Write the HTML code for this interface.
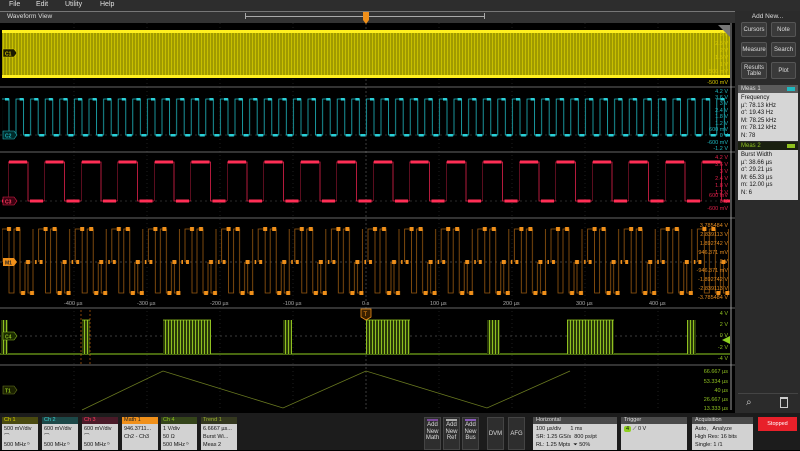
<!DOCTYPE html>
<html><head><meta charset="utf-8"><style>
*{margin:0;padding:0;box-sizing:border-box}
body{width:800px;height:450px;background:#000;font-family:"Liberation Sans",sans-serif;overflow:hidden;position:relative;color:#ddd}
.abs{position:absolute}
.menu{left:0;top:0;width:800px;height:11px;background:#2d2d2d;font-size:7px;color:#e0e0e0}
.menu span{position:absolute;top:1px}
.rp{left:735px;top:11px;width:65px;height:402px;background:#2b2b2b}
.btn{position:absolute;background:#3a3a3a;border:1px solid #555;border-radius:2px;color:#ddd;font-size:6px;text-align:center;display:flex;align-items:center;justify-content:center;line-height:6px}
.mh{position:absolute;font-size:6px;padding-left:3px;line-height:8px}
.mb{position:absolute;background:#d6d6d6;color:#111;font-size:6px;line-height:7.6px;padding:2px 3px;overflow:hidden}
.bb{left:0;top:413px;width:800px;height:37px;background:#1c1c1c}
.tab{position:absolute;top:417px;width:36px;height:33px}
.tab .h{height:7px;font-size:5.5px;line-height:7px;padding-left:2px}
.tab .b{background:#d2d2d2;color:#111;height:26px;font-size:5.5px;line-height:8px;padding:1px 2px}
.sb{position:absolute;top:417px;height:33px;background:#d2d2d2;color:#111;font-size:5.5px;line-height:8px}
.sb .h{background:#4a4a4a;color:#ddd;height:7px;line-height:7px;padding-left:3px}
.ab{position:absolute;top:417px;width:17px;height:33px;background:#2e2e2e;border:1px solid #444;font-size:6px;line-height:6.5px;text-align:center;color:#ddd}
</style></head><body>
<div class="abs menu"><span style="left:9px">File</span><span style="left:36px">Edit</span><span style="left:65px">Utility</span><span style="left:100px">Help</span></div>
<div class="abs" style="left:0;top:11px;width:735px;height:12px;background:#333;border-top:1px solid #777"></div>
<div class="abs" style="left:7px;top:13px;font-size:6.5px;color:#ddd">Waveform View</div>
<div class="abs" style="left:245px;top:16px;width:240px;height:1px;background:#aaa"></div>
<div class="abs" style="left:245px;top:13px;width:1px;height:6px;background:#aaa"></div>
<div class="abs" style="left:484px;top:13px;width:1px;height:6px;background:#aaa"></div>
<svg class="abs" style="left:0;top:11px" width="735" height="402" viewBox="0 11 735 402">
<defs>
<pattern id="yel" width="3" height="450" patternUnits="userSpaceOnUse"><rect width="3" height="450" fill="#a09a00"/><rect width="1" height="450" fill="#c8c000"/></pattern>
<pattern id="cy" x="5" y="0" width="14.6" height="450" patternUnits="userSpaceOnUse"><path d="M0 99H4V135H11V99H14.6" fill="none" stroke="#1fb8c0" stroke-width="0.8"/><rect x="0" y="98" width="4" height="2.5" fill="#2ad0d8"/><rect x="5" y="134" width="5" height="2.5" fill="#2ad0d8"/></pattern>
<pattern id="rd" x="8" y="0" width="36.5" height="450" patternUnits="userSpaceOnUse"><path d="M0 201V162H20V201H36.5" fill="none" stroke="#e0204a" stroke-width="0.8"/><rect x="1" y="160.5" width="18" height="3" fill="#ff2e55"/><rect x="22" y="199.5" width="13" height="3" fill="#ff2e55"/></pattern>
<pattern id="or" x="0" y="0" width="36.6" height="450" patternUnits="userSpaceOnUse"><path d="M2 262V229H9V293H14V229H20V293H25V262M28 262V293H33V229" fill="none" stroke="#9a5a10" stroke-width="0.8"/><g fill="#f0901a"><rect x="7" y="227" width="4" height="4"/><rect x="16" y="227" width="4" height="4"/><rect x="21" y="291" width="4" height="4"/><rect x="30" y="291" width="4" height="4"/><rect x="26" y="260" width="4" height="4"/><rect x="35" y="260" width="4" height="4"/><rect x="3" y="260" width="3" height="4"/></g></pattern>
<pattern id="gr" width="3" height="450" patternUnits="userSpaceOnUse"><rect width="3" height="450" fill="#2a3a08"/><rect width="1" height="450" fill="#8fc020"/></pattern>
</defs>
<g stroke="#333" stroke-width="0.6" stroke-dasharray="1,3">
<path d="M74 23V410M147 23V410M220 23V410M293 23V410M439 23V410M512 23V410M585 23V410M658 23V410"/>
</g>
<path d="M366 23V410" stroke="#666" stroke-width="0.6" stroke-dasharray="2,2"/>
<g stroke="#888" stroke-width="0.8"><path d="M0 87H735M0 152H735M0 218H735M0 308H735M0 365H735"/></g>
<rect x="2" y="31" width="728" height="46" fill="url(#yel)"/>
<rect x="2" y="30" width="728" height="3" fill="#ffef20"/><rect x="2" y="75" width="728" height="3" fill="#ffef20"/>
<path d="M0 135H730" stroke="#555" stroke-width="0.6" stroke-dasharray="2,3"/>
<path d="M0 201H730" stroke="#555" stroke-width="0.6" stroke-dasharray="2,3"/>
<rect x="2" y="96" width="728" height="42" fill="url(#cy)"/>
<rect x="2" y="158" width="728" height="46" fill="url(#rd)"/>
<path d="M0 262H730" stroke="#777" stroke-width="0.6" stroke-dasharray="2,3"/>
<rect x="2" y="225" width="728" height="72" fill="url(#or)"/>
<path d="M0 336H730" stroke="#777" stroke-width="0.6" stroke-dasharray="2,3"/>
<path d="M0 354H730" stroke="#8fd020" stroke-width="1"/>
<g fill="url(#gr)"><rect x="1" y="320" width="7" height="34"/><rect x="82" y="320" width="8" height="34"/><rect x="163" y="320" width="48" height="34"/><rect x="283" y="320" width="9" height="34"/><rect x="366" y="320" width="44" height="34"/><rect x="487" y="320" width="13" height="34"/><rect x="567" y="320" width="47" height="34"/><rect x="687" y="320" width="9" height="34"/></g>
<g stroke="#9ad020" stroke-width="0.8"><path d="M163 320H211M567 320H614M366 320H410M82 320H90"/></g>
<path d="M81 310V365M90 310V365" stroke="#e07010" stroke-width="0.6" stroke-dasharray="2,2"/>
<path d="M82 410L163 371L283 408L366 371L487 408L570 371" fill="none" stroke="#6a7a20" stroke-width="0.8"/>
<g font-size="5.5" fill="#aaa"><text x="64" y="305">-400 µs</text><text x="137" y="305">-300 µs</text><text x="210" y="305">-200 µs</text><text x="283" y="305">-100 µs</text><text x="362" y="305">0 s</text><text x="430" y="305">100 µs</text><text x="503" y="305">200 µs</text><text x="576" y="305">300 µs</text><text x="649" y="305">400 µs</text></g>
<g font-size="5.5" text-anchor="end">
<g fill="#d8c800"><text x="728" y="36">3 V</text><text x="728" y="45">2.5 V</text><text x="728" y="52">2 V</text><text x="728" y="59">1.5 V</text><text x="728" y="66">1 V</text><text x="728" y="73">500 mV</text><text x="728" y="84">-500 mV</text></g>
<g fill="#1fb8c0"><text x="728" y="93">4.2 V</text><text x="728" y="99">3.6 V</text><text x="728" y="105">3 V</text><text x="728" y="112">2.4 V</text><text x="728" y="118">1.8 V</text><text x="728" y="125">1.2 V</text><text x="728" y="131">600 mV</text><text x="728" y="137">0 V</text><text x="728" y="144">-600 mV</text><text x="728" y="150">-1.2 V</text></g>
<g fill="#e0204a"><text x="728" y="159">4.2 V</text><text x="728" y="166">3.6 V</text><text x="728" y="173">3 V</text><text x="728" y="180">2.4 V</text><text x="728" y="187">1.8 V</text><text x="728" y="194">1.2 V</text><text x="728" y="197">600 mV</text><text x="728" y="203">0 V</text><text x="728" y="210">-600 mV</text></g>
<g fill="#e08a20"><text x="728" y="227">3.785484 V</text><text x="728" y="236">2.839113 V</text><text x="728" y="245">1.892742 V</text><text x="728" y="254">946.371 mV</text><text x="728" y="263">0 V</text><text x="728" y="272">-946.371 mV</text><text x="728" y="281">-1.892742 V</text><text x="728" y="290">-2.839113 V</text><text x="728" y="299">-3.785484 V</text></g>
<g fill="#8fc020"><text x="728" y="315">4 V</text><text x="728" y="326">2 V</text><text x="728" y="337">0 V</text><text x="728" y="349">-2 V</text><text x="728" y="360">-4 V</text></g>
<g fill="#8fc020"><text x="728" y="373">66.667 µs</text><text x="728" y="383">53.334 µs</text><text x="728" y="392">40 µs</text><text x="728" y="401">26.667 µs</text><text x="728" y="410">13.333 µs</text></g>
</g>
<g font-size="5" font-weight="bold">
<path d="M3 49H14L17 53L14 57H3Z" fill="#1a1a00" stroke="#d8c800" stroke-width="0.6"/><text x="5" y="55.5" fill="#d8c800">C1</text>
<path d="M3 131H14L17 135L14 139H3Z" fill="#002a2a" stroke="#1fb8c0" stroke-width="0.6"/><text x="5" y="137.5" fill="#1fb8c0">C2</text>
<path d="M3 197H14L17 201L14 205H3Z" fill="#3a0010" stroke="#e0204a" stroke-width="0.6"/><text x="5" y="203.5" fill="#ff4060">C3</text>
<path d="M3 258H14L17 262L14 266H3Z" fill="#f0901a"/><text x="5" y="264.5" fill="#222">M1</text>
<path d="M3 332H14L17 336L14 340H3Z" fill="#1a2a00" stroke="#8fc020" stroke-width="0.6"/><text x="5" y="338.5" fill="#8fc020">C4</text>
<path d="M3 386H14L17 390L14 394H3Z" fill="#1a2000" stroke="#6a7a20" stroke-width="0.6"/><text x="5" y="392.5" fill="#8fc020">T1</text>
</g>
<path d="M361 309H371V317L366 320L361 317Z" fill="#3a2000" stroke="#f0901a" stroke-width="0.8"/><text x="363.5" y="316" font-size="6" fill="#f0901a">T</text>
<path d="M363 12H369V20L366 24L363 20Z" fill="#f0901a"/>
<path d="M722 340L730 336L730 344Z" fill="#8fd020"/>
<path d="M718 25H730V37Z" fill="#777"/>
<line x1="731" y1="23" x2="731" y2="410" stroke="#999" stroke-width="1"/>
</svg>
<div class="abs rp"></div>
<div class="abs" style="left:735px;top:13px;width:65px;text-align:center;font-size:6.5px;color:#ddd">Add New...</div>
<div class="btn" style="left:741px;top:22px;width:26px;height:15px">Cursors</div>
<div class="btn" style="left:771px;top:22px;width:25px;height:15px">Note</div>
<div class="btn" style="left:741px;top:42px;width:26px;height:15px">Measure</div>
<div class="btn" style="left:771px;top:42px;width:25px;height:15px">Search</div>
<div class="btn" style="left:741px;top:62px;width:26px;height:17px">Results<br>Table</div>
<div class="btn" style="left:771px;top:62px;width:25px;height:17px">Plot</div>
<div class="mh" style="left:738px;top:85px;width:60px;height:8px;background:#5a5a5a;color:#ddd">Meas 1<span style="position:absolute;right:3px;top:2px;width:8px;height:4px;background:#1fb8c0"></span></div>
<div class="mb" style="left:738px;top:93px;width:60px;height:48px">Frequency<br>µ': 78.13 kHz<br>σ': 19.43 Hz<br>M: 78.25 kHz<br>m: 78.12 kHz<br>N: 78</div>
<div class="mh" style="left:738px;top:142px;width:60px;height:8px;background:#1a2010;color:#8fc020">Meas 2<span style="position:absolute;right:3px;top:2px;width:8px;height:4px;background:#8fc020"></span></div>
<div class="mb" style="left:738px;top:150px;width:60px;height:50px">Burst Width<br>µ': 38.66 µs<br>σ': 29.21 µs<br>M: 65.33 µs<br>m: 12.00 µs<br>N: 6</div>
<div class="abs" style="left:738px;top:393px;width:60px;height:1px;background:#444"></div>
<div class="abs" style="left:746px;top:397px;font-size:10px;color:#ccc">⌕</div>
<div class="abs" style="left:780px;top:397px;width:8px;height:11px;border:1px solid #ccc;border-top:2px solid #ccc"></div>
<div class="abs bb"></div>
<div class="tab" style="left:2px"><div class="h" style="background:#4a4a10;color:#d8d000">Ch 1</div><div class="b">500 mV/div<br>⌒<br>500 MHz ᵇ</div></div>
<div class="tab" style="left:42px"><div class="h" style="background:#1c4848;color:#40d0d0">Ch 2</div><div class="b">600 mV/div<br>⌒<br>500 MHz ᵇ</div></div>
<div class="tab" style="left:82px"><div class="h" style="background:#4a1a28;color:#ff4060">Ch 3</div><div class="b">600 mV/div<br>⌒<br>500 MHz ᵇ</div></div>
<div class="tab" style="left:122px"><div class="h" style="background:#f0901a;color:#222">Math 1</div><div class="b">946.3711...<br>Ch2 - Ch3</div></div>
<div class="tab" style="left:161px"><div class="h" style="background:#34441a;color:#8fc020">Ch 4</div><div class="b">1 V/div<br>50 Ω<br>500 MHz ᵇ</div></div>
<div class="tab" style="left:201px"><div class="h" style="background:#34381f;color:#9ab030">Trend 1</div><div class="b">6.6667 µs...<br>Burst Wi...<br>Meas 2</div></div>
<div class="ab" style="left:424px"><div style="height:2px;background:#7a4a9a;margin:1px 2px"></div>Add<br>New<br>Math</div>
<div class="ab" style="left:443px"><div style="height:2px;background:#aaa;margin:1px 2px"></div>Add<br>New<br>Ref</div>
<div class="ab" style="left:462px"><div style="height:2px;background:#8a5aba;margin:1px 2px"></div>Add<br>New<br>Bus</div>
<div class="ab" style="left:487px;line-height:33px">DVM</div>
<div class="ab" style="left:508px;line-height:33px">AFG</div>
<div class="sb" style="left:533px;width:84px"><div class="h">Horizontal</div><div style="padding:1px 3px">100 µs/div &nbsp;&nbsp;&nbsp;&nbsp;&nbsp;1 ms<br>SR: 1.25 GS/s &nbsp;800 ps/pt<br>RL: 1.25 Mpts &nbsp;⏷ 50%</div></div>
<div class="sb" style="left:621px;width:66px"><div class="h">Trigger</div><div style="padding:1px 3px"><span style="background:#8fd020;border-radius:2px;padding:0 2px">4</span> ⟋ 0 V</div></div>
<div class="sb" style="left:692px;width:61px"><div class="h">Acquisition</div><div style="padding:1px 3px">Auto, &nbsp;&nbsp;Analyze<br>High Res: 16 bits<br>Single: 1 /1</div></div>
<div class="abs" style="left:758px;top:417px;width:39px;height:14px;background:#e8202a;color:#fff;font-size:5.5px;text-align:center;line-height:14px">Stopped</div>
</body></html>
